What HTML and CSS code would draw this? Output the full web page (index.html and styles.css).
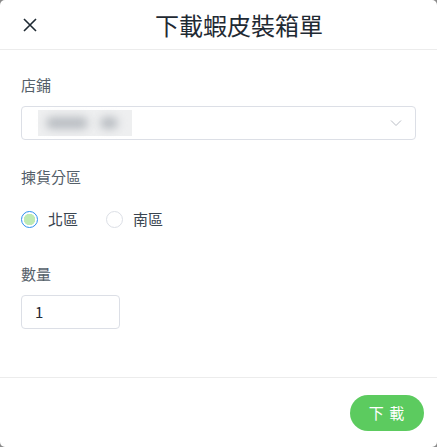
FILE: index.html
```html
<!DOCTYPE html>
<html lang="zh-Hant">
<head>
<meta charset="utf-8">
<link rel="stylesheet" href="styles.css">
</head>
<body>
<div class="dialog">
  <header class="head">
    <button class="close" aria-label="close">
      <svg width="16" height="16" viewBox="0 0 16 16"><path d="M2 2 L14 14 M14 2 L2 14" stroke="#1f2a33" stroke-width="1.6" fill="none"/></svg>
    </button>
    <h1 class="title">下載蝦皮裝箱單</h1>
  </header>
  <main class="body">
    <div class="field">
      <div class="label">店鋪</div>
      <div class="select">
        <div class="blur"><span class="b1"></span><span class="b2"></span></div>
        <svg class="chev" width="12" height="8" viewBox="0 0 12 8"><path d="M1 1.5 L6 6.5 L11 1.5" stroke="#b8bcc4" stroke-width="1" fill="none"/></svg>
      </div>
    </div>
    <div class="field">
      <div class="label">揀貨分區</div>
      <div class="radios">
        <label class="radio"><span class="dot on"></span>北區</label>
        <label class="radio"><span class="dot"></span>南區</label>
      </div>
    </div>
    <div class="field">
      <div class="label">數量</div>
      <div class="input">1</div>
    </div>
  </main>
  <footer class="foot">
    <button class="btn">下 載</button>
  </footer>
</div>
</body>
</html>
```
FILE: styles.css
```css
html { background: #8a8a8a; }
body {
  margin: 0;
  font-family: "Noto Sans CJK TC", "Noto Sans", sans-serif;
}
.dialog {
  width: 437px;
  height: 447px;
  background: #fff;
  border-radius: 5px;
  display: flex;
  flex-direction: column;
  overflow: hidden;
}
.head {
  height: 49px;
  border-bottom: 1px solid #ececec;
  position: relative;
  display: flex;
  align-items: center;
  justify-content: center;
  flex: none;
}
.close {
  position: absolute;
  left: 22px;
  top: 17px;
  width: 16px;
  height: 16px;
  padding: 0;
  border: 0;
  background: none;
  display: flex;
}
.title {
  margin: 0 0 0 41px;
  font-size: 24px;
  font-weight: 400;
  color: #1f2a33;
  line-height: 49px;
}
.body {
  flex: 1;
  padding: 24px 21px 0 21px;
  display: flex;
  flex-direction: column;
  gap: 26px;
}
.field { display: flex; flex-direction: column; }
.label {
  font-size: 15px;
  color: #55606a;
  line-height: 22px;
  margin-bottom: 10px;
}
.select {
  height: 32px;
  border: 1px solid #dcdfe6;
  border-radius: 4px;
  display: flex;
  align-items: center;
  justify-content: space-between;
  padding: 0 13px 0 16px;
}
.blur {
  width: 94px;
  height: 26px;
  background: #eeeff0;
  display: flex;
  align-items: center;
  gap: 12px;
  padding-left: 8px;
  box-sizing: border-box;
}
.blur span {
  height: 12px;
  background: #b9bdc2;
  border-radius: 6px;
  filter: blur(4px);
}
.b1 { width: 42px; }
.b2 { width: 18px; }
.radios {
  display: flex;
  gap: 28px;
  margin-top: 11px;
  margin-bottom: 8px;
}
.radio {
  display: flex;
  align-items: center;
  gap: 10px;
  font-size: 15px;
  color: #3a4550;
  line-height: 20px;
}
.dot {
  width: 15px;
  height: 15px;
  border: 1px solid #dcdfe6;
  border-radius: 50%;
  box-sizing: content-box;
  background: #fff;
}
.dot.on {
  border-color: #2d8ff0;
  background: radial-gradient(circle, #bfeab4 0 5.5px, #fff 6px);
}
.input {
  width: 84px;
  height: 32px;
  border: 1px solid #dcdfe6;
  border-radius: 4px;
  padding-left: 13px;
  font-size: 15px;
  line-height: 32px;
  color: #1f2a33;
}
.foot {
  height: 69px;
  border-top: 1px solid #ececec;
  display: flex;
  align-items: center;
  justify-content: flex-end;
  padding-right: 13px;
  flex: none;
}
.btn {
  width: 74px;
  height: 36px;
  border: 0;
  border-radius: 18px;
  background: #5ccb5f;
  color: #fff;
  font-family: inherit;
  font-size: 15px;
  letter-spacing: 1px;
}
```
